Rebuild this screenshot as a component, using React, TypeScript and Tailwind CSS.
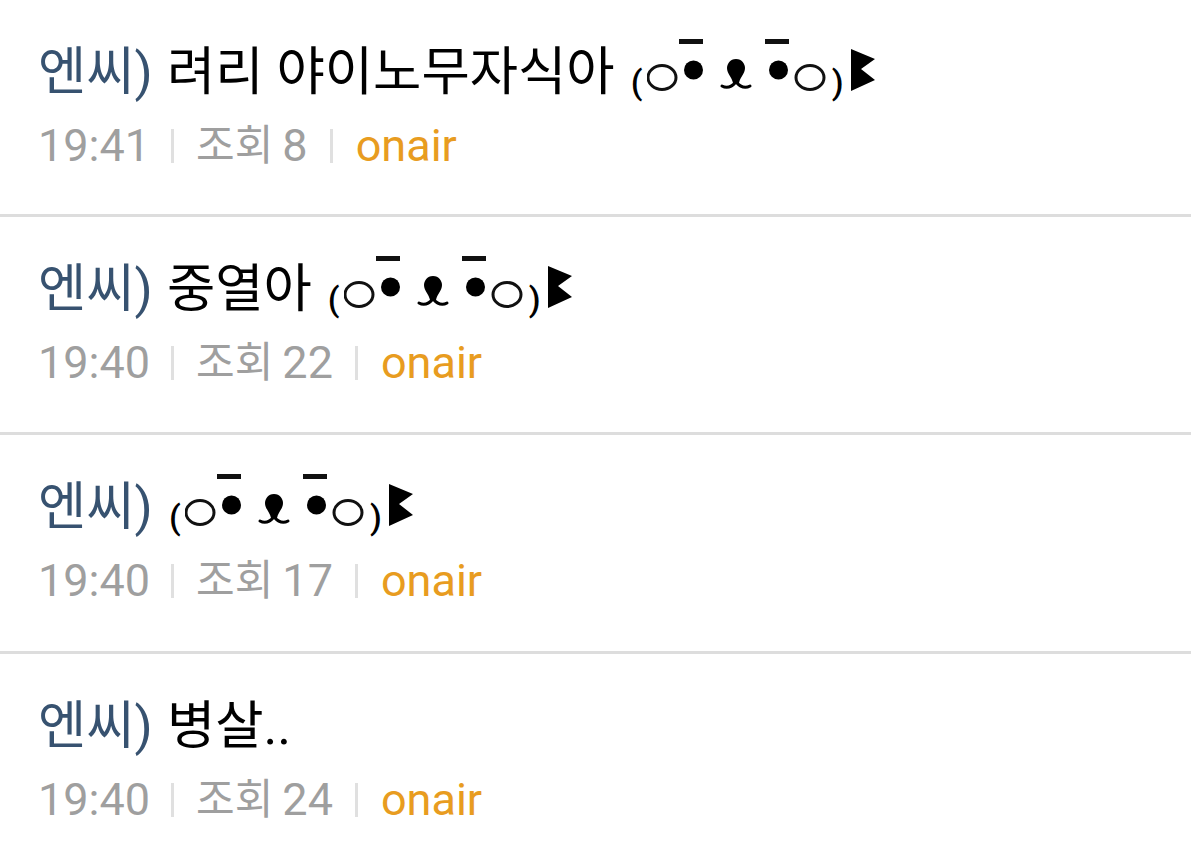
const items = [
  { title: "려리 야이노무자식아", time: "19:41", views: "조회", count: "8", face: true },
  { title: "중열아", time: "19:40", views: "조회", count: "22", face: true },
  { title: "", time: "19:40", views: "조회", count: "17", face: true },
  { title: "병살..", time: "19:40", views: "조회", count: "24", face: false },
];

function Face() {
  return (
    <span className="flex h-[64px] items-start self-start mt-[1px] ml-[2px]">
      <span className="w-[16px] text-[34px] font-medium leading-[64px] mt-[13px]">(</span>
      <svg width="180" height="60" viewBox="0 0 180 60" className="shrink-0">
        <ellipse cx="15" cy="40.5" rx="14" ry="12" fill="none" stroke="#111" strokeWidth="3" />
        <circle cx="46.5" cy="33" r="9.5" fill="#000" />
        <rect x="32" y="2" width="24" height="5" fill="#111" />
        <path d="M89 22C95 22 98 27 98 31C98 37 93 40 92 46L86 46C85 40 80 37 80 31C80 27 83 22 89 22Z" fill="#000" />
        <path d="M75 49Q82 53 89 45Q96 53 103 49" fill="none" stroke="#000" strokeWidth="3" strokeLinecap="round" />
        <circle cx="131.5" cy="33" r="9.5" fill="#000" />
        <rect x="118" y="2" width="24" height="5" fill="#111" />
        <ellipse cx="163" cy="40.5" rx="14" ry="12" fill="none" stroke="#111" strokeWidth="3" />
      </svg>
      <span className="w-[24px] text-[34px] font-medium leading-[64px] mt-[13px] pl-[5px]">)</span>
      <svg width="24" height="42" viewBox="0 0 24 42" className="shrink-0 mt-[12px]">
        <polygon points="0,0 24,10 10,20 24,31 0,42" fill="#000" />
      </svg>
    </span>
  );
}

function App() {
  return (
    <div className="w-[1191px] h-[847px] overflow-hidden bg-white font-['Roboto','Noto_Sans_CJK_KR',sans-serif]">
      {items.map((item, i) => (
        <div
          key={i}
          className="h-[218.5px] first:h-[216.5px] px-[38px] pt-[36px] border-b-[3px] border-[#dddddd] last:border-b-0"
        >
          <div className="flex items-start gap-[14px] h-[72px] text-[52.5px] leading-[72px] text-black whitespace-nowrap">
            <span className="text-[#375270]">엔씨)</span>
            {item.title && <span>{item.title}</span>}
            {item.face && <Face />}
          </div>
          <div className="flex items-center mt-[14px] h-[48px] text-[45px] leading-[48px] text-[#9f9f9f]">
            <span>{item.time}</span>
            <span className="w-[3px] h-[34px] bg-[#e0e0e0] ml-[21px] mr-[22px]" />
            <span className="text-[42px]">{item.views}</span>
            <span className="ml-[9px]">{item.count}</span>
            <span className="w-[3px] h-[34px] bg-[#e0e0e0] ml-[22px] mr-[23px]" />
            <span className="text-[#e89c20]">onair</span>
          </div>
        </div>
      ))}
    </div>
  );
}

export default App;
